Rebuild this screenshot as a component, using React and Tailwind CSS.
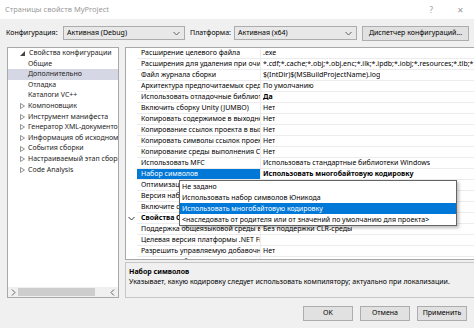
import React from "react";

const tree = [
  { t: "Свойства конфигурации", root: true },
  { t: "Общие" },
  { t: "Дополнительно", sel: true },
  { t: "Отладка" },
  { t: "Каталоги VC++" },
  { t: "Компоновщик", arrow: true },
  { t: "Инструмент манифеста", arrow: true },
  { t: "Генератор XML-документов", arrow: true },
  { t: "Информация об исходном коде", arrow: true },
  { t: "События сборки", arrow: true },
  { t: "Настраиваемый этап сборки", arrow: true },
  { t: "Code Analysis", arrow: true },
];

const rows = [
  { n: "Расширение целевого файла", v: ".exe" },
  { n: "Расширения для удаления при очис", v: "*.cdf;*.cache;*.obj;*.obj.enc;*.ilk;*.ipdb;*.iobj;*.resources;*.tlb;*.tli;*.tlh" },
  { n: "Файл журнала сборки", v: "$(IntDir)$(MSBuildProjectName).log" },
  { n: "Архитектура предпочитаемых средс", v: "По умолчанию" },
  { n: "Использовать отладочные библиоте", v: "Да", bold: true },
  { n: "Включить сборку Unity (JUMBO)", v: "Нет" },
  { n: "Копировать содержимое в выходно", v: "Нет" },
  { n: "Копирование ссылок проекта в вых", v: "Нет" },
  { n: "Копировать символы ссылок проек", v: "Нет" },
  { n: "Копирование среды выполнения С++", v: "Нет" },
  { n: "Использовать MFC", v: "Использовать стандартные библиотеки Windows" },
  { n: "Набор символов", v: "Использовать многобайтовую кодировку", sel: true },
  { n: "Оптимизация всей программы", v: "" },
  { n: "Версия набора инструментов", v: "" },
  { n: "Включите стандартную библиотеку", v: "" },
  { n: "Свойства C++/CLI", v: "", cat: true },
  { n: "Поддержка общеязыковой среды в", v: "Без поддержки CLR-среды" },
  { n: "Целевая версия платформы .NET Fr", v: "" },
  { n: "Разрешить управляемую добавочну", v: "Нет" },
  { n: "Разрешить сборку", v: "" },
];

const options = [
  "Не задано",
  "Использовать набор символов Юникода",
  "Использовать многобайтовую кодировку",
  "<наследовать от родителя или от значений по умолчанию для проекта>",
];

const Chevron = ({ up, className = "", color = "#606060" }) => (
  <svg width="7" height="5" viewBox="0 0 7 5" className={className}>
    <polyline
      points={up ? "0.5,4 3.5,1 6.5,4" : "0.5,1 3.5,4 6.5,1"}
      fill="none"
      stroke={color}
      strokeWidth="1"
    />
  </svg>
);

const Combo = ({ text, w }) => (
  <div className={`flex items-center justify-between h-[14px] ${w} border border-[#acacac] bg-[#e8e8e8] pl-[3px] pr-[4px]`}>
    <span>{text}</span>
    <Chevron />
  </div>
);

const Btn = ({ children, w = "w-[50px]" }) => (
  <div className={`flex items-center justify-center h-[15px] ${w} border border-[#adadad] bg-[#e1e1e1]`}>
    {children}
  </div>
);

export default function App() {
  return (
    <div
      className="w-[474px] h-[328px] bg-[#f0f0f0] flex flex-col text-[7px] text-black overflow-hidden"
      style={{ fontFamily: '"Noto Sans", "Open Sans", sans-serif' }}
    >
      {/* title */}
      <div className="h-[19px] bg-white flex items-center justify-between pl-[5px] pr-[10px] text-[7.5px] text-[#9a9a9a]">
        <span>Страницы свойств MyProject</span>
        <div className="flex items-center gap-[24px] text-[8px]">
          <span>?</span>
          <span>✕</span>
        </div>
      </div>

      {/* config row */}
      <div className="mt-[7px] h-[14px] flex items-center pl-[6px]">
        <span className="w-[57px]">Конфигурация:</span>
        <Combo text="Активная (Debug)" w="w-[122px]" />
        <span className="w-[44px] ml-[5px]">Платформа:</span>
        <Combo text="Активная (x64)" w="w-[123px]" />
        <div className="ml-[5px]">
          <Btn w="w-[107px]">Диспетчер конфигураций...</Btn>
        </div>
      </div>

      {/* main */}
      <div className="mt-[7px] h-[251px] flex gap-[6px] px-[7px]">
        {/* tree */}
        <div className="w-[112px] border border-[#a8a8a8] bg-white flex flex-col">
          <div className="flex-1 text-[#1e1e1e] overflow-hidden">
            {tree.map((it, i) => (
              <div
                key={i}
                className={`h-[10.6px] leading-[10.6px] flex items-center whitespace-nowrap overflow-hidden ${it.sel ? "bg-[#d5d7e4]" : ""}`}
              >
                {it.root ? (
                  <>
                    <svg width="5" height="5" viewBox="0 0 5 5" className="ml-[12px] mr-[4px] shrink-0">
                      <polygon points="5,0 5,5 0,5" fill="#444" />
                    </svg>
                    <span>{it.t}</span>
                  </>
                ) : (
                  <>
                    <span className="w-[20px] flex justify-end pr-[3px] shrink-0">
                      {it.arrow && (
                        <svg width="5" height="6" viewBox="0 0 5 6">
                          <polygon points="0.5,0.5 4.5,3 0.5,5.5" fill="none" stroke="#777" strokeWidth="0.8" />
                        </svg>
                      )}
                    </span>
                    <span>{it.t}</span>
                  </>
                )}
              </div>
            ))}
          </div>
          <div className="h-[10px] bg-[#f0f0f0] flex items-center">
            <Chevron className="-rotate-90 ml-[2px]" />
            <div className="h-[8px] w-[77px] ml-[1px] bg-[#cdcdcd]" />
            <div className="flex-1" />
            <Chevron className="rotate-90 mr-[2px]" />
          </div>
        </div>

        {/* right column */}
        <div className="flex-1 flex flex-col gap-[2px]">
          <div className="h-[213px] border border-[#a8a8a8] bg-white flex relative">
            <div className="flex-1 overflow-hidden">
              {rows.map((r, i) => (
                <div key={i} className="flex h-[11px] leading-[10px]">
                  <div className="w-[11px] shrink-0 flex items-center justify-center">
                    {r.cat && <Chevron color="#333" />}
                  </div>
                  <div
                    className={`w-[124px] shrink-0 pl-[4px] whitespace-nowrap overflow-hidden border-b border-r border-[#ececec] ${r.sel ? "bg-[#0078d7] text-white" : ""} ${r.cat ? "font-bold" : ""}`}
                  >
                    {r.n}
                  </div>
                  <div
                    className={`flex-1 min-w-0 pl-[2px] whitespace-nowrap overflow-hidden border-b border-[#ececec] flex items-center justify-between ${r.bold || r.sel ? "font-bold" : ""}`}
                  >
                    <span className="overflow-hidden">{r.v}</span>
                    {r.sel && (
                      <div className="w-[10px] h-[11px] border border-[#569de5] bg-[#e5f1fb] flex items-center justify-center shrink-0">
                        <Chevron color="#444" />
                      </div>
                    )}
                  </div>
                </div>
              ))}
            </div>
            <div className="w-[10px] bg-[#f0f0f0] flex flex-col items-center">
              <Chevron up className="mt-[3px]" />
              <div className="w-[8px] flex-1 bg-[#cdcdcd] mt-[5px] mb-[5px]" />
              <Chevron className="mb-[3px]" />
            </div>

            {/* dropdown list */}
            <div className="absolute left-[53px] top-[132px] w-[278px] border border-[#646464] bg-white shadow-[2px_2px_3px_rgba(0,0,0,0.25)]">
              {options.map((o, i) => (
                <div
                  key={i}
                  className={`h-[11px] leading-[11px] pl-[2px] whitespace-nowrap ${i === 2 ? "bg-[#0078d7] text-white" : ""}`}
                >
                  {o}
                </div>
              ))}
            </div>
          </div>

          <div className="flex-1 border border-[#c6c6c6] bg-[#f0f0f0] pl-[3px] pt-[4px] leading-[10px]">
            <div className="font-bold">Набор символов</div>
            <div>Указывает, какую кодировку следует использовать компилятору; актуально при локализации.</div>
          </div>
        </div>
      </div>

      {/* buttons */}
      <div className="mt-[8px] flex justify-end gap-[7px] pr-[7px]">
        <Btn>OK</Btn>
        <Btn>Отмена</Btn>
        <Btn>Применить</Btn>
      </div>
    </div>
  );
}
